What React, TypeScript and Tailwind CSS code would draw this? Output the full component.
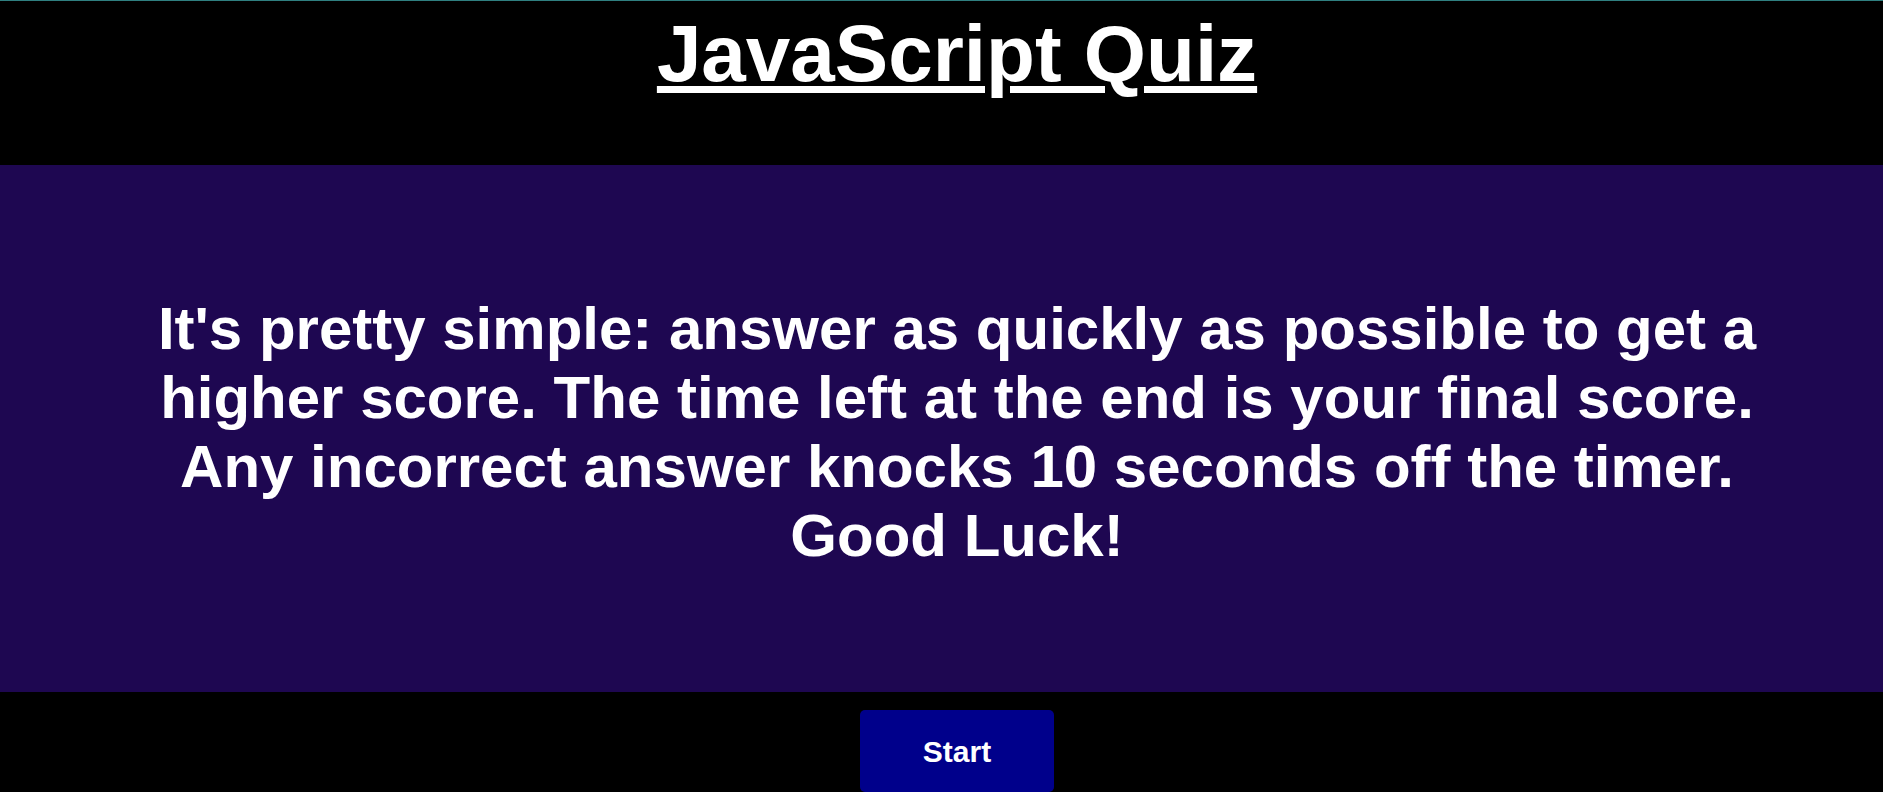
import React from "react";

export default function App() {
  return (
    <div className="min-h-screen bg-black font-['Liberation_Sans',Arial,sans-serif] text-white">
      <div className="h-px bg-[#2f7f80]" />

      {/* Header */}
      <header className="h-[164px] pl-[31px] pt-[7px] text-center">
        <h1 className="text-[80px] font-bold leading-[normal] underline decoration-[7px] underline-offset-[5px]">
          JavaScript Quiz
        </h1>
      </header>

      {/* Intro */}
      <section className="flex h-[527px] items-center justify-center bg-[#1e0751] pt-[6px] pl-[131px] pr-[100px]">
        <p className="text-center text-[60px] font-bold leading-[normal]">
          It's pretty simple: answer as quickly as possible to get a higher score. The time left at the end is your
          final score. Any incorrect answer knocks 10 seconds off the timer. Good Luck!
        </p>
      </section>

      <div className="flex justify-center pl-[31px] pt-[18px]">
        <button className="h-[82px] w-[194px] rounded-[5px] bg-[#00008b] text-[30px] font-bold text-white">
          Start
        </button>
      </div>
    </div>
  );
}
